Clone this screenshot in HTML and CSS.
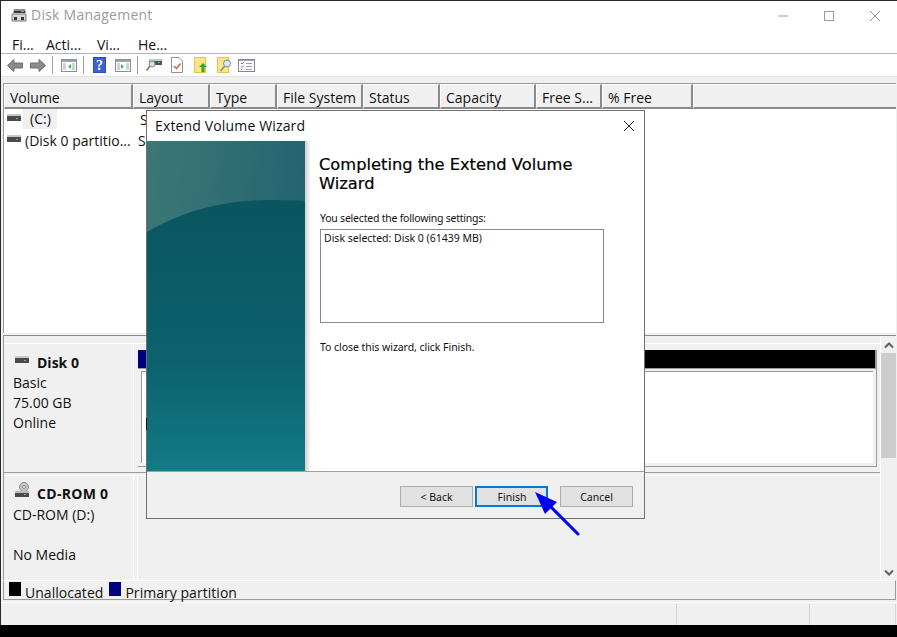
FILE: index.html
```html
<!DOCTYPE html>
<html lang="en">
<head>
<meta charset="utf-8">
<title>Disk Management</title>
<link rel="stylesheet" href="styles.css">
</head>
<body>
<svg class="defs" width="0" height="0">
  <defs>
    <symbol id="disk" viewBox="0 0 14 7">
      <rect x="0" y="0" width="14" height="2" fill="#c9c9c9"/>
      <rect x="0" y="2" width="14" height="5" fill="#4a4a4a"/>
      <rect x="9" y="4" width="2" height="1" fill="#3fe04a"/>
    </symbol>
  </defs>
</svg>
<div class="window">
  <header class="titlebar">
    <svg class="appicon" width="16" height="16" viewBox="0 0 16 16"><path d="M3 1h11l1 4H2z" fill="#8a8a8a"/><rect x="3" y="3" width="11" height="2" fill="#3a3a3a"/><rect x="10" y="3" width="3" height="1" fill="#49d24f"/><path d="M1 6h14v7H1z" fill="#d8d8d8" stroke="#777" stroke-width="1"/><rect x="3" y="9" width="3" height="3" fill="#333"/><rect x="10" y="9" width="3" height="3" fill="#333"/></svg>
    <span class="apptitle">Disk Management</span>
    <div class="wincontrols">
      <svg width="12" height="12" viewBox="0 0 12 12"><path d="M1 6h10" stroke="#999" fill="none"/></svg>
      <svg width="12" height="12" viewBox="0 0 12 12"><rect x="1.5" y="1.5" width="9" height="9" stroke="#999" fill="none"/></svg>
      <svg width="12" height="12" viewBox="0 0 12 12"><path d="M1 1l10 10M11 1L1 11" stroke="#999" fill="none"/></svg>
    </div>
  </header>
  <nav class="menubar">
    <span class="menu m1">Fi...</span><span class="menu m2">Acti...</span><span class="menu m3">Vi...</span><span class="menu m4">He...</span>
  </nav>
  <div class="toolbar">
    <svg class="tb t-back" width="16" height="13" viewBox="0 0 16 13"><path d="M0.500 6.500L7 0.500V4h8.500v5H7v3.500z" fill="#8c8c8c" stroke="#6e6e6e"/></svg>
    <svg class="tb t-fwd" width="16" height="13" viewBox="0 0 16 13"><path d="M15.500 6.500L9 0.500V4H0.500v5H9v3.500z" fill="#8c8c8c" stroke="#6e6e6e"/></svg>
    <span class="sep s1"></span>
    <svg class="tb t-pane1" width="16" height="13" viewBox="0 0 16 13"><rect x="0.500" y="0.500" width="15" height="12" fill="#fff" stroke="#8a8f96"/><rect x="1" y="1" width="14" height="2" fill="#9aa3ad"/><rect x="2" y="4" width="3" height="7" fill="#c9d3dc"/><rect x="11" y="4" width="3" height="7" fill="#c9d3dc"/><path d="M10 5v5L7 7.500z" fill="#39b54a"/></svg>
    <span class="sep s2"></span>
    <svg class="tb t-help" width="13" height="16" viewBox="0 0 13 16"><rect width="13" height="16" fill="#2f4bb5"/><rect x="1" y="1" width="11" height="14" fill="#3e62cf"/><text x="6.500" y="12.500" class="qmark" text-anchor="middle">?</text></svg>
    <svg class="tb t-pane2" width="16" height="13" viewBox="0 0 16 13"><rect x="0.500" y="0.500" width="15" height="12" fill="#fff" stroke="#8a8f96"/><rect x="1" y="1" width="14" height="2" fill="#9aa3ad"/><rect x="2" y="4" width="3" height="7" fill="#c9d3dc"/><rect x="11" y="4" width="3" height="7" fill="#c9d3dc"/><path d="M6 5v5l3-2.500z" fill="#39b54a"/></svg>
    <span class="sep s3"></span>
    <svg class="tb t-conn" width="16" height="14" viewBox="0 0 16 14"><rect x="3" y="1" width="13" height="6" fill="#4d5157"/><rect x="3" y="1" width="13" height="2" fill="#c4c8cc"/><rect x="12" y="4" width="2" height="1" fill="#3fe04a"/><circle cx="6" cy="6" r="3" fill="#cfe3ee" stroke="#7f8b93"/><path d="M4 8L0.500 12.500" stroke="#8a6d3b" stroke-width="1.500"/></svg>
    <svg class="tb t-doc" width="12" height="16" viewBox="0 0 12 16"><path d="M0.500 0.500H8L11.500 4v11.500H0.500z" fill="#fff" stroke="#8f8f8f"/><path d="M3 9l2.500 2.500L9.500 6.500" stroke="#e0532d" stroke-width="1.300" fill="none"/></svg>
    <svg class="tb t-fup" width="13" height="16" viewBox="0 0 13 16"><rect x="0.500" y="0.500" width="11" height="15" fill="#fce38c" stroke="#e6c34a"/><path d="M9 6l4 4h-2.500v5h-3v-5H5z" fill="#27b02f"/></svg>
    <svg class="tb t-fsearch" width="15" height="16" viewBox="0 0 15 16"><rect x="0.500" y="0.500" width="11" height="15" fill="#fce38c" stroke="#e6c34a"/><circle cx="10" cy="6.500" r="3.500" fill="#d8eaf3" stroke="#7a8a96"/><path d="M7.500 9.500L3.500 14" stroke="#8c8c8c" stroke-width="1.600"/></svg>
    <svg class="tb t-list" width="17" height="13" viewBox="0 0 17 13"><rect x="0.500" y="0.500" width="16" height="12" fill="#fff" stroke="#7f858c"/><rect x="1" y="1" width="15" height="1" fill="#a2a8ae"/><path d="M3 4l1 1 2-2M3 7.500l1 1 2-2M3 11l1-1" stroke="#3f7fd8" fill="none"/><path d="M8 4.500h6M8 7.500h6M8 10.500h6" stroke="#9aa0a6"/></svg>
  </div>
  <div class="band"></div>
  <main class="content">
    <div class="colheads">
      <div class="col c1">Volume</div>
      <div class="col c2">Layout</div>
      <div class="col c3">Type</div>
      <div class="col c4">File System</div>
      <div class="col c5">Status</div>
      <div class="col c6">Capacity</div>
      <div class="col c7">Free S...</div>
      <div class="col c8">% Free</div>
      <div class="col c9"></div>
    </div>
    <div class="list">
      <div class="row first">
        <svg class="rowicon" width="14" height="7"><use href="#disk"/></svg>
        <span class="vol">(C:)</span>
        <span class="lay">S</span>
      </div>
      <div class="row second">
        <svg class="rowicon" width="14" height="7"><use href="#disk"/></svg>
        <span class="vol">(Disk 0 partitio...</span>
        <span class="lay">S</span>
      </div>
    </div>
    <div class="splitter"></div>
    <div class="lower">
      <div class="disks">
        <section class="diskrow d0">
          <div class="disklabel">
            <div class="dname"><svg class="dicon" width="14" height="7"><use href="#disk"/></svg><b>Disk 0</b></div>
            <div>Basic</div>
            <div>75.00 GB</div>
            <div>Online</div>
          </div>
          <div class="diskvol">
            <div class="capbar"><span class="capblue"></span><span class="capblack"></span></div>
            <div class="volbox"><div class="volinner"></div></div>
          </div>
        </section>
        <section class="diskrow d1">
          <div class="disklabel cd">
            <div class="dname"><svg class="dicon cdicon" width="15" height="15" viewBox="0 0 15 15"><circle cx="9" cy="5" r="4.500" fill="#c9c9c9" stroke="#8a8a8a"/><circle cx="9" cy="5" r="1.500" fill="#f0f0f0" stroke="#8a8a8a"/><rect x="0" y="9" width="14" height="6" fill="#4a4a4a"/><rect x="0" y="9" width="14" height="2" fill="#bdbdbd"/><rect x="9" y="12" width="2" height="1" fill="#3fe04a"/></svg><b>CD-ROM 0</b></div>
            <div>CD-ROM (D:)</div>
            <div>&nbsp;</div>
            <div>No Media</div>
          </div>
          <div class="cdvol"></div>
        </section>
      </div>
      <div class="scrollbar">
        <svg width="10" height="7" viewBox="0 0 10 7"><path d="M1 5.500l4-4 4 4" stroke="#606060" stroke-width="2" fill="none"/></svg>
        <div class="thumbtrack"><div class="thumb"></div></div>
        <svg width="10" height="7" viewBox="0 0 10 7"><path d="M1 1.500l4 4 4-4" stroke="#606060" stroke-width="2" fill="none"/></svg>
      </div>
    </div>
    <div class="legend">
      <span class="swatch black"></span><span class="ltext">Unallocated</span>
      <span class="swatch blue"></span><span class="ltext">Primary partition</span>
    </div>
  </main>
  <footer class="statusbar">
    <div class="st st1"></div><div class="st st2"></div><div class="st st3"></div>
  </footer>
</div>

<div class="wizard">
  <div class="wiztitle"><span>Extend Volume Wizard</span>
    <svg width="12" height="12" viewBox="0 0 12 12"><path d="M1 1l10 10M11 1L1 11" stroke="#222" fill="none"/></svg>
  </div>
  <div class="wizbody">
    <svg class="wizart" width="158" height="330" viewBox="0 0 158 330" preserveAspectRatio="none">
      <defs>
        <linearGradient id="gt" x1="0" y1="0" x2="1" y2="0.200"><stop offset="0" stop-color="#3d7777"/><stop offset="1" stop-color="#246370"/></linearGradient>
        <linearGradient id="gb" x1="0" y1="0" x2="0" y2="1"><stop offset="0" stop-color="#0a555f"/><stop offset="0.600" stop-color="#0b626d"/><stop offset="1" stop-color="#137a86"/></linearGradient>
      </defs>
      <rect width="158" height="330" fill="url(#gt)"/>
      <path d="M0 91C40 68 80 60 118 59Q140 59 158 60V330H0z" fill="url(#gb)"/>
    </svg>
    <div class="wizshadow"></div>
    <div class="wizmain">
      <h1>Completing the Extend Volume Wizard</h1>
      <p class="sel-label">You selected the following settings:</p>
      <div class="settings">Disk selected: Disk 0 (61439 MB)</div>
      <p class="closehint">To close this wizard, click Finish.</p>
    </div>
  </div>
  <div class="wizfoot">
    <button class="btn back">&lt; Back</button>
    <button class="btn finish">Finish</button>
    <button class="btn cancel">Cancel</button>
  </div>
</div>
<svg class="pointer" width="50" height="50" viewBox="0 0 50 50"><path d="M0 0L22 10L10 22z" fill="#0000f0"/><path d="M13 12L43 42" stroke="#0000f0" stroke-width="3" stroke-linecap="round"/></svg>
</body>
</html>
```
FILE: styles.css
```css
* { box-sizing: border-box; }
html, body { margin: 0; padding: 0; }
body {
  width: 897px;
  height: 637px;
  background: #000;
  overflow: hidden;
  position: relative;
  font-family: "Open Sans", "Noto Sans", sans-serif;
  font-size: 14px;
  color: #111;
}
.defs { position: absolute; }
.window {
  width: 897px;
  height: 625px;
  border-top: 1px solid #2a2a2a;
  border-left: 1px solid #2a2a2a;
  background: #f0f0f0;
  display: flex;
  flex-direction: column;
}
.titlebar {
  height: 30px;
  background: #fff;
  display: flex;
  align-items: center;
  padding-left: 10px;
  flex: none;
}
.appicon { margin-right: 4px; }
.apptitle { color: #999; font-size: 14px; letter-spacing: 0.24px; margin-top: -3px; }
.wincontrols {
  margin-left: auto;
  display: flex;
  gap: 34px;
  padding-right: 16px;
  margin-top: -1px;
}
.menubar {
  height: 23px;
  background: #fff;
  border-bottom: 1px solid #b4b4c0;
  display: flex;
  align-items: center;
  padding-left: 11px;
  padding-top: 4px;
  flex: none;
}
.menu { font-size: 14px; }
.m1 { width: 34px; }
.m2 { width: 51px; }
.m3 { width: 41px; }
.toolbar {
  height: 22px;
  background: #fff;
  display: flex;
  align-items: center;
  padding-left: 6px;
  flex: none;
}
.tb { flex: none; display: block; }
.t-fwd { margin-left: 7px; }
.sep { width: 1px; height: 18px; background: #a0a0a0; flex: none; }
.s1 { margin-left: 6px; }
.t-pane1 { margin-left: 8px; }
.s2 { margin-left: 6px; }
.t-help { margin-left: 9px; }
.t-pane2 { margin-left: 9px; }
.s3 { margin-left: 6px; }
.t-conn { margin-left: 8px; }
.t-doc { margin-left: 9px; }
.t-fup { margin-left: 11px; }
.t-fsearch { margin-left: 10px; }
.t-list { margin-left: 6px; }
.qmark { font-family: "Liberation Serif", serif; font-weight: 700; font-size: 14px; fill: #fff; }
.band {
  height: 7px;
  background: #f0f0f0;
  border-top: 1px solid #e2e2e2;
  flex: none;
}
.content {
  flex: none;
  height: 517px;
  padding-left: 2px;
  padding-right: 1px;
  display: flex;
  flex-direction: column;
}
.colheads {
  height: 26px;
  display: flex;
  flex: none;
  border-top: 1px solid #9a9a9a;
  border-left: 1px solid #9a9a9a;
  background: #f0f0f0;
}
.col {
  height: 25px;
  flex: none;
  border-top: 1px solid #fff;
  border-left: 1px solid #fff;
  border-right: 2px solid #8a8a8a;
  border-bottom: 2px solid #8a8a8a;
  padding-left: 5px;
  line-height: 25px;
  white-space: nowrap;
  overflow: hidden;
}
.c1 { width: 129px; }
.c2 { width: 77px; }
.c3 { width: 67px; }
.c4 { width: 86px; }
.c5 { width: 77px; }
.c6 { width: 96px; }
.c7 { width: 66px; }
.c8 { width: 91px; }
.c9 { flex: 1; border-right: none; }
.list {
  flex: none;
  height: 224px;
  background: #fff;
  border-left: 1px solid #9a9a9a;
}
.row {
  height: 21px;
  display: flex;
  align-items: center;
  position: relative;
  white-space: nowrap;
}
.rowicon { margin-left: 3px; flex: none; margin-top: -5px; }
.vol { margin-left: 4px; width: 114px; flex: none; height: 21px; line-height: 21px; }
.first .vol { width: 34px; padding-left: 7px; background: #f0f0f0; margin-left: 2px; line-height: 19px; height: 20px; margin-top: -1px; }
.first .lay { margin-left: 83px; margin-top: -1px; line-height: 19px; }
.second .lay { margin-left: -1px; }
.splitter {
  height: 3px;
  flex: none;
  border-top: 2px solid #f0f0f0;
  background: #8a8a8a;
}
.lower {
  flex: none;
  height: 244px;
  display: flex;
  border-left: 1px solid #9a9a9a;
}
.disks { flex: 1; display: flex; flex-direction: column; padding-top: 7px; }
.diskrow { display: flex; flex: none; }
.d0 { height: 130px; border-top: 1px solid #fff; border-bottom: 1px solid #9a9a9a; }
.d1 { height: 105px; margin-top: 2px; border-top: 1px solid #fff; }
.disklabel {
  width: 130px;
  flex: none;
  padding: 8px 0 0 9px;
  line-height: 20px;
  border-right: 1px solid #fff;
}
.dname { display: flex; align-items: center; height: 21px; }
.dname b { margin-left: 8px; font-weight: 700; }
.dicon { margin-left: 2px; margin-top: -7px; flex: none; }
.cd { padding-top: 7px; }
.cd .dname { margin-bottom: 1px; }
.cd .dname b { margin-left: 7px; letter-spacing: 0.3px; }
.cd .cdicon { margin-top: -9px; }
.diskvol { flex: 1; padding: 6px 3px 4px 4px; }
.capbar { height: 18px; display: flex; border-right: 2px solid #9a9a9a; }
.capblue { width: 10px; background: #000080; }
.capblack { flex: 1; background: #000; }
.volbox {
  height: 99px;
  border: 1px solid #9a9a9a;
  border-left: none;
  padding: 2px 3px 3px 3px;
  background: #f0f0f0;
}
.volinner { height: 100%; background: #fff; border-top: 1px solid #9a9a9a; border-left: 1px solid #9a9a9a; }
.cdvol { flex: 1; border-left: 1px solid #fff; margin-left: 3px; }
.scrollbar {
  width: 16px;
  flex: none;
  border-left: 1px solid #fff;
  display: flex;
  flex-direction: column;
  align-items: center;
  padding: 6px 0 4px;
  background: #f0f0f0;
}
.thumbtrack { flex: 1; width: 15px; padding-top: 4px; }
.thumb { height: 105px; background: #cdcdcd; }
.legend {
  height: 20px;
  flex: none;
  border-top: 1px solid #fff;
  border-left: 1px solid #9a9a9a;
  border-right: 1px solid #9a9a9a;
  border-bottom: 1px solid #9a9a9a;
  display: flex;
  align-items: center;
  padding-left: 5px;
  line-height: 19px;
}
.swatch { width: 12px; height: 14px; flex: none; margin-top: -2px; }
.swatch.black { background: #000; }
.swatch.blue { background: #000080; margin-left: 6px; }
.ltext { margin-left: 4px; white-space: nowrap; margin-top: 5px; letter-spacing: 0.04px; }
.statusbar {
  flex: 1;
  display: flex;
  margin-top: 2px;
  border-top: 1px solid #fff;
  padding-top: 1px;
  padding-right: 1px;
}
.st { height: 100%; border-right: 1px solid #d4d4d4; }
.st1 { width: 676px; }
.st2 { width: 133px; }
.st3 { flex: 1; }
.wizard {
  position: absolute;
  left: 146px;
  top: 110px;
  width: 499px;
  height: 409px;
  border: 1px solid #707070;
  background: #fff;
  display: flex;
  flex-direction: column;
}
.wizard::before {
  content: "";
  position: absolute;
  left: -1px;
  top: 307px;
  width: 1px;
  height: 12px;
  background: #111;
}
.wiztitle {
  height: 30px;
  flex: none;
  display: flex;
  align-items: center;
  justify-content: space-between;
  padding: 0 9px 0 8px;
  font-size: 14px;
  color: #111;
}
.wiztitle span { margin-top: -2px; letter-spacing: 0.15px; }
.wizbody { height: 330px; flex: none; display: flex; background: #fff; }
.wizart { display: block; flex: none; }
.wizshadow { width: 6px; flex: none; background: linear-gradient(90deg, #d0d0d0, #fff); }
.wizmain { flex: 1; padding: 14px 0 0 8px; font-family: "Noto Sans", sans-serif; font-size: 10.5px; }
.wizmain h1 {
  margin: 0;
  font-family: "DejaVu Sans", sans-serif;
  font-size: 16.3px;
  font-weight: 400;
  line-height: 19px;
  width: 280px;
  color: #000;
  -webkit-text-stroke: 0.2px #000;
}
.sel-label { margin: 18px 0 0 1px; line-height: 14px; letter-spacing: -0.22px; }
.settings {
  margin: 4px 0 0 1px;
  width: 284px;
  height: 94px;
  border: 1px solid #8a8a8a;
  padding: 1px 3px;
  line-height: 14px;
}
.closehint { margin: 17px 0 0 1px; line-height: 14px; letter-spacing: -0.05px; }
.wizfoot {
  flex: 1;
  border-top: 1px solid #a0a0a0;
  background: #f0f0f0;
  display: flex;
  padding: 14px 0 0 253px;
  align-items: flex-start;
}
.btn {
  width: 73px;
  height: 21px;
  border: 1px solid #adadad;
  background: #e1e1e1;
  font-family: "Noto Sans", sans-serif;
  font-size: 10.5px;
  color: #111;
  padding: 0;
}
.finish { margin-left: 2px; border: 2px solid #0078d7; padding-left: 1px; }
.cancel { margin-left: 12px; }
.pointer { position: absolute; left: 535px; top: 492px; }
```
